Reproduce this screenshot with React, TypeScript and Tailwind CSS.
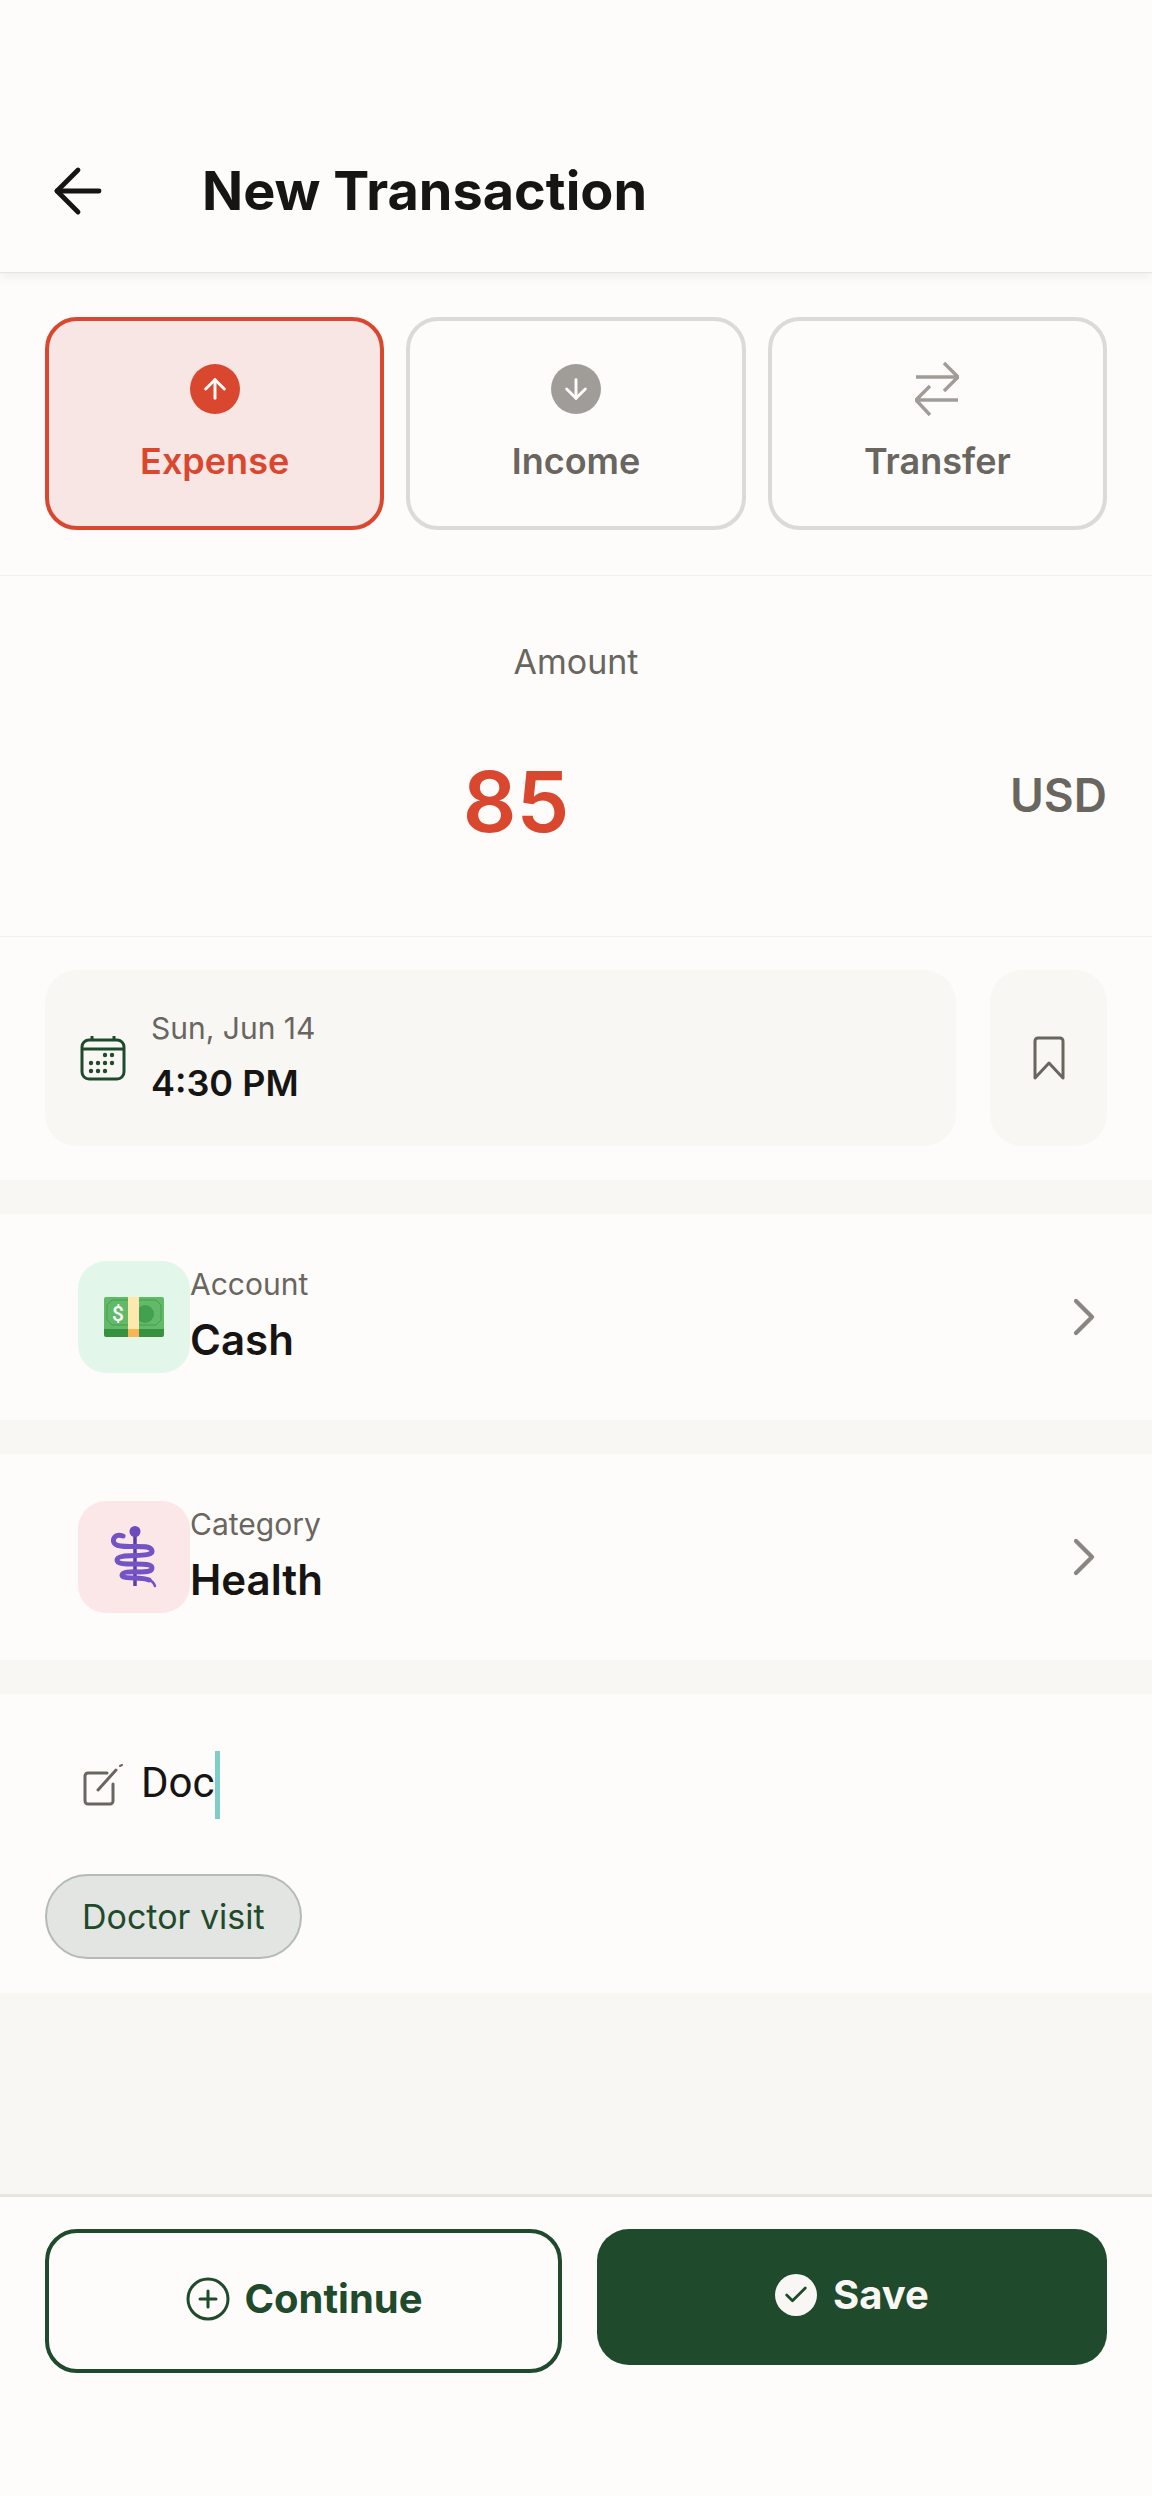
import React from 'react';
import { ArrowLeft, ArrowDown, ArrowUp, ChevronRight, CirclePlus, Check } from 'lucide-react';

const CalendarIcon = () => (
  <svg width="46" height="46" viewBox="0 0 46 46" fill="none" className="text-[#1f4a2b]">
    <rect x="2" y="5" width="42" height="39" rx="7" stroke="currentColor" strokeWidth="3" />
    <path d="M2 14h42M12 1v5M34 1v5" stroke="currentColor" strokeWidth="3" />
    <g fill="currentColor">
      <circle cx="25" cy="20" r="2.2" /><circle cx="32" cy="20" r="2.2" />
      <circle cx="11" cy="28" r="2.2" /><circle cx="18" cy="28" r="2.2" /><circle cx="25" cy="28" r="2.2" /><circle cx="32" cy="28" r="2.2" />
      <circle cx="11" cy="36" r="2.2" /><circle cx="18" cy="36" r="2.2" /><circle cx="25" cy="36" r="2.2" />
    </g>
  </svg>
);

const TransferIcon = () => (
  <svg width="44" height="56" viewBox="0 0 44 56" fill="none" stroke="#a09d98" strokeWidth="3.4">
    <path d="M1 16h42M29 2l14 14-14 14" />
    <path d="M43 39H1M15 25 1 39l14 15" />
  </svg>
);

const BookmarkIcon = () => (
  <svg width="32" height="45" viewBox="0 0 32 45" fill="none" stroke="#69655f" strokeWidth="3" strokeLinejoin="round">
    <path d="M2 5a3 3 0 0 1 3-3h22a3 3 0 0 1 3 3v37L16 27 2 42z" />
  </svg>
);

const NoteIcon = () => (
  <svg width="42" height="42" viewBox="0 0 42 42" fill="none" stroke="#69655f" strokeLinecap="round">
    <path d="M24 9H5a3 3 0 0 0-3 3v25a3 3 0 0 0 3 3h22a3 3 0 0 0 3-3V20" strokeWidth="3" />
    <path d="M15 26 33 6" strokeWidth="3" />
    <path d="M37 2l2-1" strokeWidth="2" />
  </svg>
);

const MoneyIcon = () => (
  <svg width="60" height="40" viewBox="0 0 60 40">
    <rect x="0" y="0" width="60" height="38" rx="2" fill="#62ba69" />
    <path d="M0 32h60v6a2 2 0 0 1-2 2H2a2 2 0 0 1-2-2z" fill="#37913f" />
    <path d="M8 3h44l5 5v15l-5 5H8l-5-5V8z" fill="none" stroke="#43a04e" strokeWidth="1" />
    <circle cx="41" cy="17" r="9" fill="#43a04e" />
    <rect x="24" y="0" width="11" height="32" fill="#fde9ae" />
    <rect x="24" y="32" width="11" height="8" fill="#fbb454" />
    <text x="14" y="24" fontSize="21" fontWeight="500" fill="#fff" textAnchor="middle" fontFamily="Roboto, sans-serif">$</text>
  </svg>
);

const CaduceusIcon = () => (
  <svg width="46" height="62" viewBox="0 0 46 62" fill="none">
    <path d="M24 8v52" stroke="#5b3da8" strokeWidth="3.5" />
    <circle cx="24" cy="5.5" r="5.5" fill="#6b4bbd" />
    <path d="M12 10C4 7 0 14 4 18c6 6 36-2 37 7 1 8-35 1-35 9 0 8 35 0 35 8 0 8-29 0-30 7 0 5 19 1 27 5" stroke="#7453c4" strokeWidth="5" strokeLinecap="round" />
    <path d="M38 54c3 1 5 3 6 6" stroke="#7453c4" strokeWidth="2.5" strokeLinecap="round" />
  </svg>
);

type TabProps = { label: string; active?: boolean; icon: React.ReactNode };

const TypeTab = ({ label, active, icon }: TabProps) => (
  <div
    className={`flex-1 h-[213px] rounded-[32px] border-4 flex flex-col items-center pt-[43px] ${
      active ? 'border-[#d9472f] bg-[#f8e6e4] text-[#d9472f]' : 'border-[#dcdad7] text-[#69655f]'
    }`}
  >
    <div className="w-[50px] h-[50px] flex items-center justify-center">{icon}</div>
    <span className="mt-[25px] text-[36px] leading-[44px] font-semibold">{label}</span>
  </div>
);

type RowProps = { label: string; value: string; tint: string; icon: React.ReactNode };

const PickerRow = ({ label, value, tint, icon }: RowProps) => (
  <div className="h-[206px] bg-[#fdfcfa] flex items-center pl-[78px] pr-[36px]">
    <div className={`w-[112px] h-[112px] rounded-[28px] flex items-center justify-center ${tint}`}>{icon}</div>
    <div className="flex-1 -mt-[4px]">
      <div className="text-[30px] leading-[40px] text-[#69655f]">{label}</div>
      <div className="mt-[10px] text-[42px] leading-[52px] font-semibold text-[#161514]">{value}</div>
    </div>
    <ChevronRight size={64} strokeWidth={1.6} className="text-[#8a8782]" />
  </div>
);

export default function App() {
  return (
    <div className="w-[1152px] h-[2496px] flex flex-col bg-[#f8f7f4] font-['Inter',sans-serif]">
      <header className="h-[273px] bg-[#fdfcfa] flex items-center pt-[110px] pl-[42px] border-b border-[#e6e5e2] shadow-[0_4px_10px_rgba(0,0,0,0.06)] relative">
        <ArrowLeft size={72} strokeWidth={1.6} className="text-[#161514]" />
        <h1 className="ml-[88px] text-[54px] leading-[64px] font-bold text-[#161514]">New Transaction</h1>
      </header>

      <section className="h-[303px] bg-[#fdfcfa] border-b border-[#f1f0ed] px-[45px] pt-[44px] flex gap-[22px]">
        <TypeTab
          label="Expense"
          active
          icon={
            <div className="w-[50px] h-[50px] rounded-full bg-[#d9472f] flex items-center justify-center">
              <ArrowUp size={32} strokeWidth={2.2} className="text-[#fdfcfa]" />
            </div>
          }
        />
        <TypeTab
          label="Income"
          icon={
            <div className="w-[50px] h-[50px] rounded-full bg-[#a09d98] flex items-center justify-center">
              <ArrowDown size={32} strokeWidth={2.2} className="text-[#fdfcfa]" />
            </div>
          }
        />
        <TypeTab label="Transfer" icon={<TransferIcon />} />
      </section>

      <section className="h-[361px] bg-[#fdfcfa] border-b border-[#f1f0ed] px-[45px] pt-[64px] flex flex-col">
        <div className="text-center text-[34px] leading-[44px] text-[#69655f]">Amount</div>
        <div className="mt-[66px] flex items-center">
          <div className="w-[942px] text-center text-[84px] leading-[104px] font-semibold text-[#d9472f]">85</div>
          <div className="flex-1 text-right text-[46px] leading-[56px] font-semibold text-[#69655f] -mt-[14px]">USD</div>
        </div>
      </section>

      <section className="h-[243px] bg-[#fdfcfa] px-[45px] pt-[33px] flex gap-[34px]">
        <div className="w-[911px] h-[176px] rounded-[32px] bg-[#f8f7f4] flex items-center pl-[35px]">
          <CalendarIcon />
          <div className="ml-[25px] -mt-[4px]">
            <div className="text-[30px] leading-[40px] text-[#69655f]">Sun, Jun 14</div>
            <div className="mt-[13px] text-[36px] leading-[44px] font-semibold text-[#161514]">4:30 PM</div>
          </div>
        </div>
        <div className="flex-1 h-[176px] rounded-[32px] bg-[#f8f7f4] flex items-center justify-center">
          <BookmarkIcon />
        </div>
      </section>

      <div className="mt-[34px]">
        <PickerRow label="Account" value="Cash" tint="bg-[#e3f6ea]" icon={<MoneyIcon />} />
      </div>
      <div className="mt-[34px]">
        <PickerRow label="Category" value="Health" tint="bg-[#fbe7e7]" icon={<CaduceusIcon />} />
      </div>

      <section className="mt-[34px] h-[299px] bg-[#fdfcfa] px-[45px] pt-[57px]">
        <div className="flex items-center h-[68px] pl-[38px]">
          <NoteIcon />
          <span className="ml-[16px] -mt-[4px] text-[42px] leading-[52px] text-[#161514] font-['Roboto',sans-serif]">Doc</span>
          <span className="w-[5px] h-[68px] bg-[#7fcdc9]" />
        </div>
        <div className="mt-[55px] inline-flex items-center h-[85px] px-[35px] rounded-full border-2 border-[#b4bbb5] bg-[#e2e5e2] text-[34px] text-[#1f4a2b]">
          Doctor visit
        </div>
      </section>

      <div className="flex-1" />

      <footer className="h-[302px] bg-[#fdfcfa] border-t-[3px] border-[#e6e5e2] px-[45px] pt-[32px] flex items-start gap-[35px]">
        <button className="w-[517px] h-[144px] pb-[4px] rounded-[32px] border-4 border-[#1f4a2b] flex items-center justify-center gap-[12px] text-[#1f4a2b] text-[40px] font-bold">
          <CirclePlus size={48} strokeWidth={1.5} />
          Continue
        </button>
        <button className="flex-1 h-[136px] pb-[4px] rounded-[32px] bg-[#1f4a2b] flex items-center justify-center gap-[16px] text-[#f8f7f4] text-[40px] font-bold">
          <span className="w-[42px] h-[42px] rounded-full bg-[#f8f7f4] flex items-center justify-center">
            <Check size={28} strokeWidth={2.4} className="text-[#1f4a2b]" />
          </span>
          Save
        </button>
      </footer>
    </div>
  );
}
